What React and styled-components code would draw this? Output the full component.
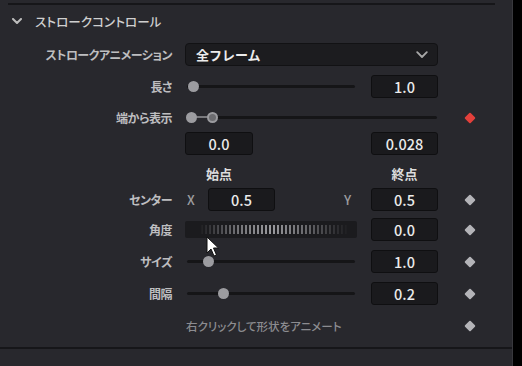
import React from "react";
import styled, { createGlobalStyle } from "styled-components";

const Global = createGlobalStyle`
  html, body { margin: 0; padding: 0; background: #000; }
  body { font-family: "Noto Sans CJK JP", "Noto Sans", sans-serif; }
`;

const Screen = styled.div`
  width: 522px;
  height: 366px;
  display: flex;
  background: #000;
  position: relative;
  overflow: hidden;
`;

const Panel = styled.div`
  width: 513px;
  height: 366px;
  background: #28282d;
  border-right: 1px solid #38383d;
  padding-top: 3px;
  box-sizing: border-box;
  display: flex;
  flex-direction: column;
`;

const Rule = styled.div`
  height: 2px;
  background: #161619;
  margin-left: ${(p) => p.$left || 0}px;
  width: ${(p) => (p.$width ? `${p.$width}px` : "auto")};
  margin-top: ${(p) => p.$top || 0}px;
`;

const Header = styled.div`
  height: 32px;
  display: flex;
  align-items: center;
  padding-left: 12px;
  gap: 13px;
  color: #cfcfcf;
  font-size: 12.5px;
  font-weight: 500;
  font-feature-settings: "palt";
  letter-spacing: 0.1px;
`;

const Body = styled.div`
  padding-top: 6px;
  display: flex;
  flex-direction: column;
`;

const Row = styled.div`
  height: ${(p) => p.$h}px;
  display: flex;
  align-items: flex-start;
`;

const Label = styled.div`
  width: 172px;
  height: 23px;
  line-height: 23px;
  text-align: right;
  color: #bebec0;
  font-size: 12px;
  font-weight: 700;
  letter-spacing: -0.5px;
  font-feature-settings: "palt";
  white-space: nowrap;
`;

const Control = styled.div`
  margin-left: 13px;
  width: 253px;
  height: 23px;
  display: flex;
  align-items: center;
`;

const Key = styled.div`
  width: 64px;
  height: 23px;
  display: flex;
  align-items: center;
  justify-content: center;
`;

const Diamond = styled.div`
  width: 8px;
  height: 8px;
  transform: rotate(45deg);
  background: ${(p) => (p.$red ? "#e2403b" : "#b4b4b8")};
  border-radius: 1px;
`;

const Dropdown = styled.div`
  width: 253px;
  height: 23px;
  box-sizing: border-box;
  background: #1c1c1f;
  border: 1px solid #121214;
  border-radius: 4px;
  display: flex;
  align-items: center;
  justify-content: space-between;
  padding: 0 9px 0 10px;
  color: #ececec;
  font-size: 13px;
  font-weight: 700;
`;

const ValueBox = styled.div`
  width: ${(p) => p.$w || 67}px;
  height: 23px;
  box-sizing: border-box;
  background: #1a1a1d;
  border: 1px solid #0f0f11;
  border-radius: 3px;
  display: flex;
  align-items: center;
  justify-content: center;
  color: #ebebeb;
  font-size: 14.5px;
  font-weight: 500;
  flex-shrink: 0;
  margin-left: ${(p) => (p.$auto ? "auto" : "0")};
`;

const TrackWrap = styled.div`
  position: relative;
  width: ${(p) => p.$w}px;
  height: 23px;
  display: flex;
  align-items: center;
  padding-left: ${(p) => p.$pl || 0}px;
  box-sizing: border-box;
`;

const Track = styled.div`
  flex: 1;
  height: 3px;
  background: #151517;
  border-radius: 2px;
`;

const Knob = styled.div`
  position: absolute;
  top: 6px;
  width: 11px;
  height: 11px;
  border-radius: 50%;
  box-sizing: border-box;
  background: ${(p) => (p.$ring ? "#6c6c70" : "#9c9ca0")};
  border: ${(p) => (p.$ring ? "2px solid #9c9ca0" : "none")};
`;

const Link = styled.div`
  position: absolute;
  top: 10px;
  height: 2px;
  background: #7a7a7e;
`;

const ColTitle = styled.div`
  width: ${(p) => p.$w}px;
  text-align: center;
  color: #dcdcdc;
  font-size: 13px;
  font-weight: 700;
  margin-left: ${(p) => p.$ml || 0}px;
`;

const Axis = styled.div`
  color: #9c9c9f;
  font-size: 13px;
  font-weight: 500;
  width: ${(p) => p.$w}px;
  padding-left: ${(p) => p.$pl || 0}px;
  margin-left: ${(p) => (p.$auto ? "auto" : "0")};
  box-sizing: border-box;
`;

const Wheel = styled.div`
  width: 172px;
  height: 17px;
  background: #1b1b1e;
  border-radius: 2px;
  display: flex;
  align-items: center;
  padding: 0 4px;
  box-sizing: border-box;
`;

const Ticks = styled.div`
  width: 100%;
  height: 9px;
  background: repeating-linear-gradient(90deg, #9a9a9e 0 2px, transparent 2px 4px);
  -webkit-mask-image: linear-gradient(90deg, transparent 6%, rgba(0,0,0,0.25) 14%, rgba(0,0,0,0.7) 30%, #000 50%, rgba(0,0,0,0.6) 72%, rgba(0,0,0,0.2) 88%, transparent 98%);
  mask-image: linear-gradient(90deg, transparent 6%, rgba(0,0,0,0.25) 14%, rgba(0,0,0,0.7) 30%, #000 50%, rgba(0,0,0,0.6) 72%, rgba(0,0,0,0.2) 88%, transparent 98%);
`;

const Hint = styled.div`
  color: #8c8c90;
  font-size: 11.5px;
  font-weight: 500;
  font-feature-settings: "palt";
  padding-left: 1px;
`;

const Cursor = styled.svg`
  position: absolute;
  left: 206px;
  top: 236px;
`;

function Chevron({ size = 10, color = "#b8b8b8", w = 2 }) {
  return (
    <svg width={size} height={size * 0.65} viewBox="0 0 10 6.5">
      <path d="M1 1 L5 5 L9 1" fill="none" stroke={color} strokeWidth={w} strokeLinecap="round" strokeLinejoin="round" />
    </svg>
  );
}

function Slider({ knob }) {
  return (
    <TrackWrap $w={170} $pl={2}>
      <Track />
      <Knob style={{ left: knob - 185 - 5.5 }} />
    </TrackWrap>
  );
}

export default function App() {
  return (
    <Screen>
      <Global />
      <Panel>
        <Rule $left={8} $width={487} />
        <Header>
          <Chevron size={10} color="#bdbdbd" />
          <span>ストロークコントロール</span>
        </Header>
        <Body>
          <Row $h={32}>
            <Label>ストロークアニメーション</Label>
            <Control>
              <Dropdown>
                <span>全フレーム</span>
                <Chevron size={12} color="#a8a8a8" w={1.5} />
              </Dropdown>
            </Control>
          </Row>
          <Row $h={31}>
            <Label>長さ</Label>
            <Control>
              <Slider knob={193} />
              <ValueBox $auto>1.0</ValueBox>
            </Control>
          </Row>
          <Row $h={26}>
            <Label>端から表示</Label>
            <Control>
              <TrackWrap $w={252} $pl={28}>
                <Track />
                <Link style={{ left: 7, width: 20 }} />
                <Knob style={{ left: 1 }} />
                <Knob $ring style={{ left: 22 }} />
              </TrackWrap>
            </Control>
            <Key>
              <Diamond $red />
            </Key>
          </Row>
          <Row $h={30}>
            <Label />
            <Control>
              <ValueBox $w={68}>0.0</ValueBox>
              <ValueBox $auto>0.028</ValueBox>
            </Control>
          </Row>
          <Row $h={26}>
            <Label />
            <Control>
              <ColTitle $w={68}>始点</ColTitle>
              <ColTitle $w={67} $ml={118}>終点</ColTitle>
            </Control>
          </Row>
          <Row $h={30}>
            <Label>センター</Label>
            <Control>
              <Axis $w={23} $pl={2}>X</Axis>
              <ValueBox>0.5</ValueBox>
              <Axis $w={27} $auto>Y</Axis>
              <ValueBox>0.5</ValueBox>
            </Control>
            <Key>
              <Diamond />
            </Key>
          </Row>
          <Row $h={32}>
            <Label>角度</Label>
            <Control>
              <Wheel>
                <Ticks />
              </Wheel>
              <ValueBox $auto>0.0</ValueBox>
            </Control>
            <Key>
              <Diamond />
            </Key>
          </Row>
          <Row $h={32}>
            <Label>サイズ</Label>
            <Control>
              <Slider knob={208} />
              <ValueBox $auto>1.0</ValueBox>
            </Control>
            <Key>
              <Diamond />
            </Key>
          </Row>
          <Row $h={32}>
            <Label>間隔</Label>
            <Control>
              <Slider knob={223} />
              <ValueBox $auto>0.2</ValueBox>
            </Control>
            <Key>
              <Diamond />
            </Key>
          </Row>
          <Row $h={32}>
            <Label />
            <Control>
              <Hint>右クリックして形状をアニメート</Hint>
            </Control>
            <Key>
              <Diamond />
            </Key>
          </Row>
        </Body>
        <Rule $top={1} />
      </Panel>
      <Cursor width="14" height="22" viewBox="0 0 14 22">
        <path d="M1 1 L1 17 L5 13 L8 20 L10.5 19 L7.5 12 L12.5 12 Z" fill="#fff" stroke="#111" strokeWidth="1" strokeLinejoin="round" />
      </Cursor>
    </Screen>
  );
}
